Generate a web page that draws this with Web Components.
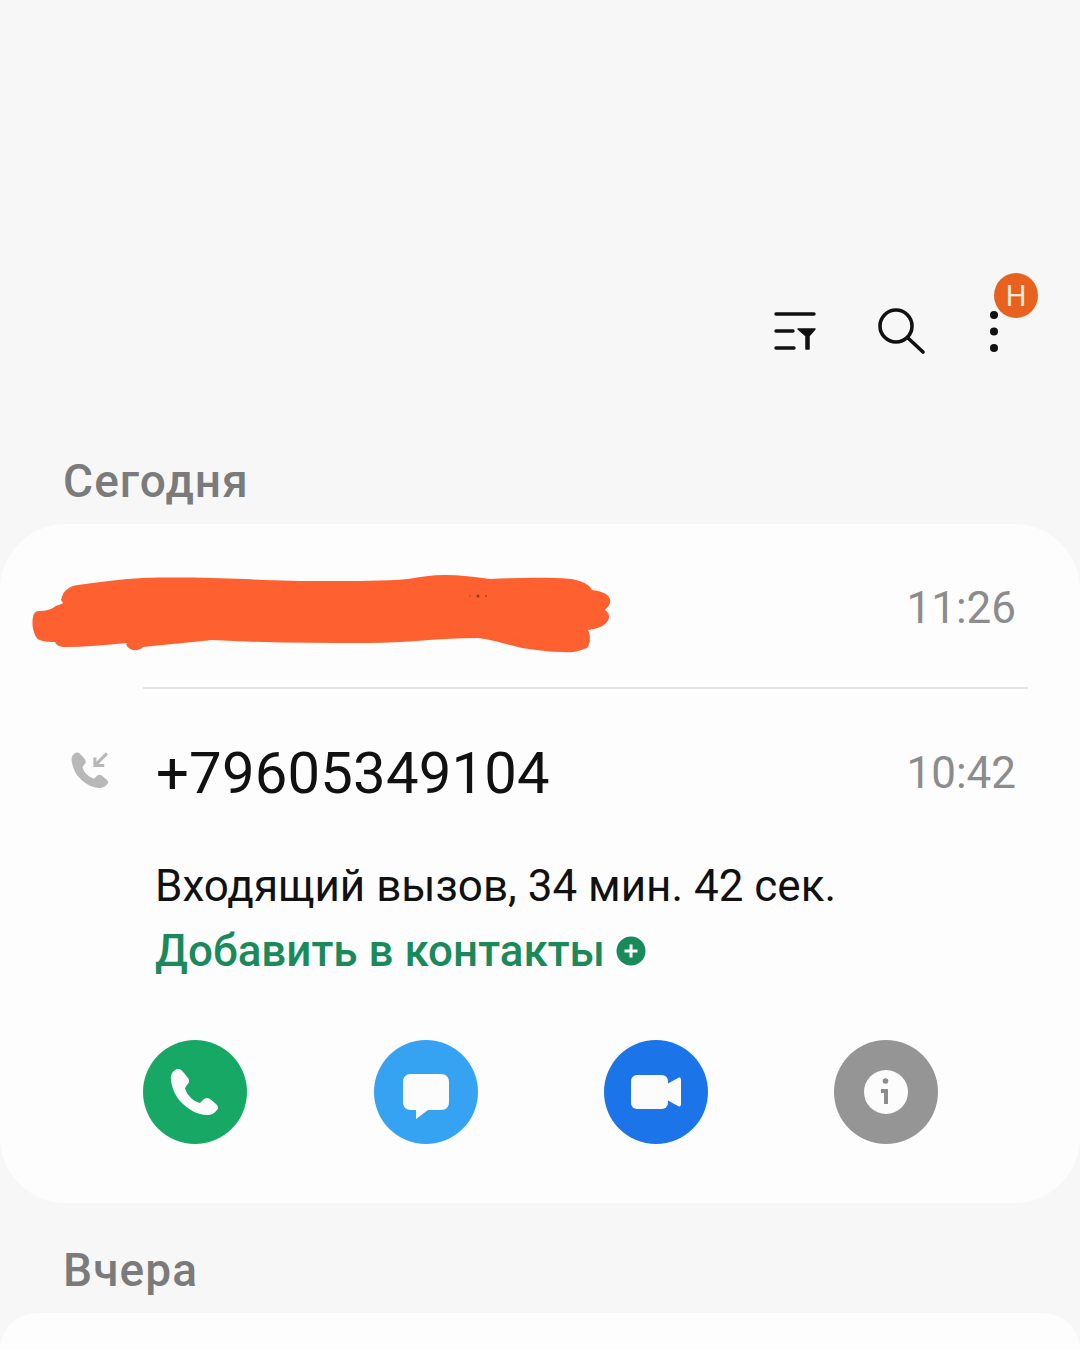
<!DOCTYPE html>
<html lang="ru">
<head>
<meta charset="utf-8">
<title>Журнал</title>
<style>
    html, body { margin: 0; padding: 0; }
    body {
        width: 1080px;
        height: 1350px;
        overflow: hidden;
        background: #f7f7f7;
        font-family: Roboto, "Liberation Sans", sans-serif;
    }
</style>
</head>
<body>
<log-toolbar></log-toolbar>
<day-label>Сегодня</day-label>
<log-card>
    <log-entry time="11:26" divider>
        <redact-scribble></redact-scribble>
    </log-entry>
    <log-entry time="10:42" expanded number="+79605349104"
        detail="Входящий вызов, 34 мин. 42 сек."
        add="Добавить в контакты"></log-entry>
    <log-actions></log-actions>
</log-card>
<day-label class="next">Вчера</day-label>
<log-card class="stub"></log-card>

<script>
const PHONE_PATH = 'M28 40C27 34 31 29 35 29C38 29 39 31 41 33L45 38C47 41 46 43 44 45L42 48C43 52 45 55 48 58C51 61 54 62 57 63L60 60C62 58 64 57 67 59L73 64C75 66 76 68 74 70C71 74 68 75 64 75C55 75 46 70 39 63C33 57 29 49 28 40Z';

class LogToolbar extends HTMLElement {
    constructor() {
        super();
        this.attachShadow({ mode: 'open' });
        this.shadowRoot.innerHTML = `
            <style>
                :host {
                    display: flex;
                    justify-content: flex-end;
                    padding: 301px 56px 0 0;
                    height: 60px;
                }
                svg { width: 60px; height: 60px; display: block; color: #111; }
                .search { margin-left: 46px; }
                .more-wrap { margin-left: 33px; position: relative; width: 60px; height: 60px; }
                .badge {
                    position: absolute;
                    left: 30px;
                    top: -28px;
                    width: 44px;
                    height: 45px;
                    border-radius: 50%;
                    background: #e8621f;
                    color: #fdeadb;
                    font-size: 29px;
                    line-height: 47px;
                    text-align: center;
                }
            </style>
            <svg viewBox="0 0 60 60" fill="none" stroke="currentColor" stroke-width="3.4" stroke-linecap="round">
                <path d="M11 13H49M11 30H28M11 47H29"/>
                <path d="M33 28H50L44 35V48H41V35Z" fill="currentColor" stroke-width="1.5" stroke-linejoin="round"/>
            </svg>
            <svg class="search" viewBox="0 0 60 60" fill="none" stroke="currentColor" stroke-width="3.6" stroke-linecap="round">
                <circle cx="25" cy="25" r="16"/>
                <path d="M37 37L52 51"/>
            </svg>
            <div class="more-wrap">
                <svg viewBox="0 0 60 60" fill="currentColor">
                    <circle cx="30" cy="14" r="4"/>
                    <circle cx="30" cy="30.500" r="4"/>
                    <circle cx="30" cy="47" r="4"/>
                </svg>
                <span class="badge">Н</span>
            </div>
        `;
    }
}

class DayLabel extends HTMLElement {
    constructor() {
        super();
        this.attachShadow({ mode: 'open' });
        this.shadowRoot.innerHTML = `
            <style>
                :host {
                    display: block;
                    padding: 90px 0 0 63px;
                    height: 73px;
                    line-height: 60px;
                    font-size: 46px;
                    letter-spacing: 1.1px;
                    font-weight: 500;
                    color: #7b7b7b;
                }
                :host(.next) { padding-top: 37px; }
            </style>
            <slot></slot>
        `;
    }
}

class LogCard extends HTMLElement {
    constructor() {
        super();
        this.attachShadow({ mode: 'open' });
        this.shadowRoot.innerHTML = `
            <style>
                :host {
                    display: block;
                    height: 679px;
                    background: #fdfdfd;
                    border-radius: 66px;
                    position: relative;
                }
                :host(.stub) { height: 37px; border-radius: 66px 66px 0 0; }
            </style>
            <slot></slot>
        `;
    }
}

class LogEntry extends HTMLElement {
    constructor() {
        super();
        this.attachShadow({ mode: 'open' });
    }

    connectedCallback() {
        const time = this.getAttribute('time');
        const number = this.getAttribute('number');
        const expanded = this.hasAttribute('expanded');
        this.shadowRoot.innerHTML = `
            <style>
                :host {
                    display: block;
                    position: relative;
                    font-family: Roboto, "Liberation Sans", sans-serif;
                }
                .top {
                    box-sizing: border-box;
                    display: grid;
                    grid-template-columns: 156px 1fr auto;
                    align-items: center;
                    height: 163px;
                    padding: 4px 64px 0 0;
                }
                :host([expanded]) .top { height: 168px; padding-top: 0; }
                .type { display: flex; padding-left: 64px; margin-top: -2px; }
                .type svg { width: 51px; height: 51px; display: block; }
                .number { font-size: 58px; color: #111; letter-spacing: 0.2px; }
                .time { font-size: 44px; color: #8c8c8c; grid-column: 3; }
                .rule {
                    height: 2px;
                    margin: 0 52px 0 143px;
                    background: #e4e4e4;
                }
                .more { padding-left: 155px; }
                .detail { font-size: 44px; line-height: 65px; color: #111; height: 65px; margin-top: -3px; }
                .add {
                    display: flex;
                    align-items: center;
                    gap: 11px;
                    font-size: 44px;
                    line-height: 65px;
                    font-weight: 500;
                    color: #1a8a5a;
                }
                .add svg { width: 30px; height: 30px; display: block; margin-top: -2px; }
            </style>
            <div class="top">
                ${expanded ? `
                <div class="type">
                    <svg viewBox="18 22 66 66">
                        <path d="${PHONE_PATH}" fill="#b8b8b8"/>
                        <path d="M73.500 30.300L58 46M58 35.500V46H70" fill="none" stroke="#b8b8b8" stroke-width="4"/>
                    </svg>
                </div>
                <div class="number">${number}</div>` : ''}
                <div class="time">${time}</div>
            </div>
            ${this.hasAttribute('divider') ? '<div class="rule"></div>' : ''}
            ${expanded ? `
            <div class="more">
                <div class="detail">${this.getAttribute('detail')}</div>
                <div class="add">
                    <span>${this.getAttribute('add')}</span>
                    <svg viewBox="0 0 30 30">
                        <circle cx="15" cy="15" r="14.500" fill="#1a8a5a"/>
                        <path d="M8.500 15H21.500M15 8.500V21.500" stroke="#fdfdfd" stroke-width="3"/>
                    </svg>
                </div>
            </div>` : ''}
            <slot></slot>
        `;
    }
}

// orange marker stroke over the hidden contact name
class RedactScribble extends HTMLElement {
    constructor() {
        super();
        this.attachShadow({ mode: 'open' });
        this.shadowRoot.innerHTML = `
            <style>
                :host {
                    display: block;
                    position: absolute;
                    left: 0;
                    top: 0;
                    width: 640px;
                    height: 163px;
                }
                svg { display: block; width: 640px; height: 163px; }
            </style>
            <svg viewBox="0 524 640 163">
                <path fill="#ff6030" d="M61 600C63 590 70 586 78 585C100 582 122 579 143 578C180 577 215 578 245 579C275 581 300 581 327 581C355 581 385 581 408 579C420 577 432 575 445 575C460 575 475 577 490 579C515 578 545 577 571 579C582 581 589 584 592 590C600 591 608 593 610 599C611 604 608 607 605 610C610 613 610 618 607 622C603 627 596 629 588 630C591 636 590 643 588 647C582 651 572 653 563 652C550 652 536 650 522 648C508 645 494 640 478 638C440 638 405 643 367 643C315 643 265 643 212 640C190 642 165 645 143 647C139 651 132 651 129 648C126 646 126 644 127 643C105 645 85 647 65 647C60 647 56 645 55 642C46 642 38 641 36 637C32 630 32 622 33 617C34 612 36 611 40 611C45 611 49 610 53 608C56 605 60 605 63 603Z"/>
                <circle cx="478" cy="596" r="1.500" fill="#8a3a20"/>
                <circle cx="470" cy="596" r="1" fill="#c44a28"/>
                <circle cx="486" cy="596" r="1" fill="#b04428"/>
            </svg>
        `;
    }
}

class LogActions extends HTMLElement {
    constructor() {
        super();
        this.attachShadow({ mode: 'open' });
        this.shadowRoot.innerHTML = `
            <style>
                :host {
                    display: flex;
                    gap: 126.300px;
                    padding: 56px 0 0 143.300px;
                }
                svg { width: 104px; height: 104px; display: block; flex: none; }
            </style>
            <svg viewBox="0 0 104 104">
                <circle cx="52" cy="52" r="52" fill="#18a865"/>
                <path d="${PHONE_PATH}" fill="#fcfcfc"/>
            </svg>
            <svg viewBox="0 0 104 104">
                <circle cx="52" cy="52" r="52" fill="#36a3f2"/>
                <path fill="#fcfcfc" d="M37 34H67C72 34 75 37 75 42V62C75 67 72 70 67 70H54L42 79V70H37C32 70 29 67 29 62V42C29 37 32 34 37 34Z"/>
            </svg>
            <svg viewBox="0 0 104 104">
                <circle cx="52" cy="52" r="52" fill="#1b74e8"/>
                <rect x="27" y="35" width="37" height="34" rx="6" fill="#fcfcfc"/>
                <path fill="#fcfcfc" d="M63 44L74 38C76 37 77 38 77 40V64C77 66 76 67 74 66L63 60Z"/>
            </svg>
            <svg viewBox="0 0 104 104">
                <circle cx="52" cy="52" r="52" fill="#959595"/>
                <circle cx="52" cy="52" r="22" fill="#fcfcfc"/>
                <circle cx="51.500" cy="41" r="2.800" fill="#8c8c8c"/>
                <path d="M47 51H52V64" fill="none" stroke="#8c8c8c" stroke-width="4"/>
            </svg>
        `;
    }
}

customElements.define('log-toolbar', LogToolbar);
customElements.define('day-label', DayLabel);
customElements.define('log-card', LogCard);
customElements.define('log-entry', LogEntry);
customElements.define('redact-scribble', RedactScribble);
customElements.define('log-actions', LogActions);
</script>
</body>
</html>
